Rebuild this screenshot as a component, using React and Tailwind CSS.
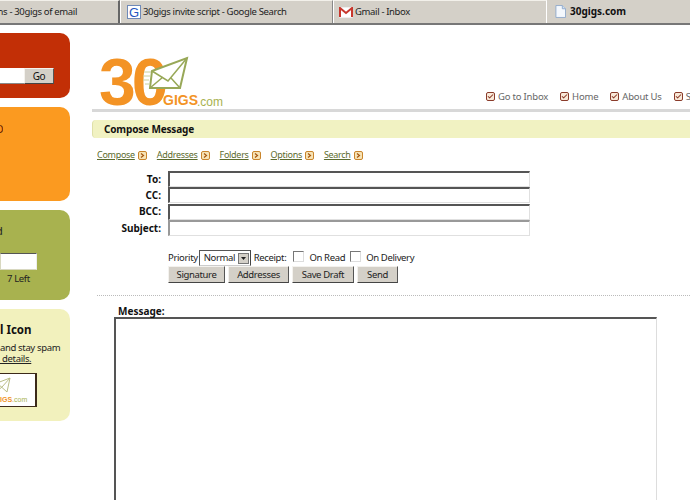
import { Check } from "lucide-react";

const Arrow = () => (
  <span className="inline-flex w-[9px] h-[9px] ml-[3px] items-center justify-center rounded-[2px] border border-[#c9852c] bg-[#f7e3b5] text-[#a5560f]">
    <svg width="5" height="5" viewBox="0 0 5 5" fill="none" stroke="currentColor" strokeWidth="1.2">
      <path d="M1 0.5 3.5 2.5 1 4.5" />
    </svg>
  </span>
);

const NavIcon = () => (
  <span className="inline-flex w-[9px] h-[9px] mr-[3px] items-center justify-center rounded-[2px] border border-[#8a3b2a] bg-[#f9e9d8] text-[#8a3b2a]">
    <Check size={7} strokeWidth={3.5} />
  </span>
);

const Tab = ({ className, children }) => (
  <div className={`h-[23px] flex items-center shrink-0 bg-[#d4d0c8] border-t border-[#f2f0ea] ${className}`}>
    {children}
  </div>
);

const Field = ({ label, sunken }) => (
  <div className="flex items-center h-[16.3px]">
    <span className="w-[69px] mr-[7px] text-right font-bold text-[10px] tracking-normal text-[#111]">{label}</span>
    <div className={`w-[362px] h-[16px] bg-white border border-[#e0e0e0] border-t-[2px] border-l-[2px] ${sunken}`} />
  </div>
);

const Btn = ({ w, children }) => (
  <div className={`h-[17px] flex items-center justify-center bg-[#d4d0c8] border border-[#f4f2ee] border-r-[#555] border-b-[#444] text-[#222] ${w}`}>
    {children}
  </div>
);

const Check2 = () => <span className="inline-block w-[11px] h-[11px] bg-white border border-[#777] border-r-[#ddd] border-b-[#ddd] mb-[4px]" />;

export default function App() {
  return (
    <div className="w-[690px] h-[500px] overflow-hidden bg-white text-[9.5px] tracking-[-0.35px] text-[#222] font-['Noto_Sans','DejaVu_Sans',sans-serif]">
      {/* tabs */}
      <div className="h-[25px] flex items-end bg-[#d4d0c8] border-b-[2px] border-[#777] text-[#222]">
        <Tab className="w-[120px] border-r-[2px] border-r-[#666] justify-end pr-[41px]">
          <span className="whitespace-nowrap">ns - 30gigs of email</span>
        </Tab>
        <Tab className="w-[213px] pl-[6px] gap-[2px] border-l border-l-white border-r border-r-[#888]">
          <span className="w-[14px] h-[14px] flex items-center justify-center bg-white border border-[#6f8ab8] text-[#2456c0] text-[13px] leading-none font-['Liberation_Sans',sans-serif]">G</span>
          <span className="whitespace-nowrap">30gigs invite script - Google Search</span>
        </Tab>
        <Tab className="w-[214px] pl-[5px] gap-[2px] border-l border-l-white border-r border-r-white">
          <svg width="14" height="11" viewBox="0 0 14 11">
            <rect width="14" height="11" fill="#fff" stroke="#bbb" strokeWidth="0.5" />
            <path d="M1 10V1l6 5 6-5v9" fill="none" stroke="#c8372d" strokeWidth="2" />
          </svg>
          <span className="whitespace-nowrap">Gmail - Inbox</span>
        </Tab>
        <div className="h-[24px] flex-1 flex items-center pl-[8px] gap-[4px] bg-[#d4d0c8] font-bold text-[10px] tracking-normal text-[#111]">
          <svg width="11" height="13" viewBox="0 0 12 14">
            <path d="M1 .5h7l3.500 3.500v9.500H1z" fill="#f4f8fd" stroke="#8fa9c9" />
            <path d="M8 .5V4h3.500" fill="#cfe0f2" stroke="#8fa9c9" />
          </svg>
          30gigs.com
        </div>
      </div>

      <div className="flex">
        {/* clipped sidebar */}
        <div className="w-[70px] mr-[22px] pt-[8px] flex flex-col gap-[9px] shrink-0">
          <div className="h-[65px] rounded-r-[10px] bg-[#c22f06] flex items-start justify-end pt-[35px] pr-[16px]">
            <div className="w-[24px] h-[16px] bg-white border-b border-[#888]" />
            <div className="w-[30px] h-[16px] flex items-center justify-center bg-[#d4d0c8] border border-[#f4f2ee] border-r-[#555] border-b-[#444] text-[10px] text-[#111]">Go</div>
          </div>
          <div className="h-[94px] rounded-r-[10px] bg-[#fb9a20] pt-[16px] text-[11px] text-[#6b1d00] leading-none">
            <span className="block w-[3px] overflow-hidden">
              <span className="block -ml-[5px]">O</span>
            </span>
          </div>
          <div className="h-[90px] rounded-r-[10px] bg-[#a8b24f] relative">
            <span className="absolute left-0 top-[15px] w-[3px] overflow-hidden text-[11px] leading-none text-[#222]">
              <span className="block -ml-[4px]">d</span>
            </span>
            <div className="absolute left-0 top-[43px] w-[37px] h-[17px] bg-white border border-[#d8d8c0] border-t-[#555] border-r-[#eee]" />
            <span className="absolute left-[7px] top-[63px] leading-[12px] whitespace-nowrap">7 Left</span>
          </div>
          <div className="h-[112px] rounded-r-[10px] bg-[#f2f1bd] relative overflow-hidden">
            <div className="pt-[12px] text-[11.5px] font-bold tracking-normal leading-[18px] text-[#111] whitespace-nowrap">l Icon</div>
            <div className="mt-[3px] leading-[11px] text-[#222] whitespace-nowrap">and stay spam</div>
            <div className="leading-[11px] text-[#222] underline whitespace-nowrap">&nbsp;details.</div>
            <div className="absolute left-0 top-[64px] w-[37px] h-[34px] bg-white border-y border-r-2 border-[#3c2a1a] overflow-hidden">
              <svg className="absolute -left-[4px] top-[3px]" width="16" height="18" viewBox="0 0 16 18" fill="none" stroke="#b9bd86">
                <path d="M1 6 14 1 11 15 1 6zM1 14 6 10M14 1 6 10" />
              </svg>
              <span className="absolute left-0 bottom-[3px] text-[7px] tracking-normal font-bold leading-none text-[#f0942a] whitespace-nowrap font-['Liberation_Sans',sans-serif]">IGS<span className="font-normal text-[#a8b24f]">.com</span></span>
            </div>
          </div>
        </div>

        <div className="flex-1 min-w-0">
          {/* logo and top nav */}
          <div className="h-[87px] flex items-end border-b-[3px] border-[#d8d8d8]">
            <div className="relative w-[140px] h-[84px] shrink-0 self-start tracking-normal font-['Liberation_Sans',sans-serif]">
              <span className="absolute left-[7px] top-[24px] text-[66px] leading-[66px] font-bold tracking-[-4px] text-[#f39325]">30</span>
              <svg className="absolute left-[51px] top-[31px]" width="46" height="36" viewBox="0 0 46 36" fill="none">
                <path d="M9 15 44 2 37 32 7 32Z" fill="#fff" stroke="#98a858" strokeWidth="2" />
                <path d="M9 15 25 25 44 2M7 32 20 21M37 32 28 22" stroke="#98a858" strokeWidth="1.500" />
                <path d="M1 16h7M0 20h7M0 24h6M2 28h5" stroke="#c9d09c" />
              </svg>
              <span className="absolute left-[71px] top-[68px] text-[14px] leading-[14px] font-bold text-[#f39325]">GIGS</span>
              <span className="absolute left-[105px] top-[70px] text-[12px] leading-[14px] text-[#a8b24f]">.com</span>
            </div>
            <div className="ml-[254px] shrink-0 flex gap-[12px] pb-[5px] tracking-[-0.2px] text-[#666] whitespace-nowrap">
              <span className="flex items-center"><NavIcon />Go to Inbox</span>
              <span className="flex items-center"><NavIcon />Home</span>
              <span className="flex items-center"><NavIcon />About Us</span>
              <span className="flex items-center"><NavIcon />Support</span>
            </div>
          </div>

          {/* compose */}
          <div className="mt-[8px] h-[18px] pl-[11px] flex items-center rounded-l-[4px] bg-[#f1f2c2] border-l border-[#dfe0a8] font-bold text-[10px] tracking-[-0.15px] text-[#111]">Compose Message</div>

          <div className="mt-[10px] pl-[5px] flex items-center gap-[10px] h-[14px] text-[9px] tracking-[-0.3px] text-[#5c6b2e]">
            <span className="flex items-center"><span className="underline">Compose</span><Arrow /></span>
            <span className="flex items-center"><span className="underline">Addresses</span><Arrow /></span>
            <span className="flex items-center"><span className="underline">Folders</span><Arrow /></span>
            <span className="flex items-center"><span className="underline">Options</span><Arrow /></span>
            <span className="flex items-center"><span className="underline">Search</span><Arrow /></span>
          </div>

          <div className="mt-[9px]">
            <Field label="To:" sunken="border-t-[#555] border-l-[#555]" />
            <Field label="CC:" sunken="border-t-[#555] border-l-[#555]" />
            <Field label="BCC:" sunken="border-t-[#555] border-l-[#555]" />
            <Field label="Subject:" sunken="border-t-[#999] border-l-[#999]" />
          </div>

          <div className="mt-[14px] ml-[76px] h-[16px] flex items-center whitespace-nowrap">
            <span>Priority</span>
            <div className="ml-[1px] w-[52px] h-[16px] flex items-center justify-between bg-white border border-[#555] border-r-[#444] border-b-[#ccc] pl-[4px] pr-[1px]">
              Normal
              <span className="w-[11px] h-[11px] flex items-center justify-center bg-[#d4d0c8] border border-[#777]">
                <svg width="5" height="3" viewBox="0 0 5 3"><path d="M0 0h5L2.500 3z" fill="#222" /></svg>
              </span>
            </div>
            <span className="ml-[3px] mr-[7px]">Receipt:</span>
            <Check2 />
            <span className="ml-[5px] mr-[5px]">On Read</span>
            <Check2 />
            <span className="ml-[5px]">On Delivery</span>
          </div>

          <div className="ml-[76px] flex gap-[3px]">
            <Btn w="w-[57px]">Signature</Btn>
            <Btn w="w-[61px]">Addresses</Btn>
            <Btn w="w-[62px]">Save Draft</Btn>
            <Btn w="w-[41px]">Send</Btn>
          </div>

          <div className="mt-[12px] ml-[5px] border-t border-dotted border-[#bbb]" />

          <div className="mt-[9px] ml-[26px] font-bold text-[10px] tracking-normal text-[#111] leading-[12px]">Message:</div>
          <div className="ml-[22px] w-[543px] h-[200px] bg-white border border-[#ddd] border-t-[2px] border-l-[2px] border-t-[#555] border-l-[#555]" />
        </div>
      </div>
    </div>
  );
}
